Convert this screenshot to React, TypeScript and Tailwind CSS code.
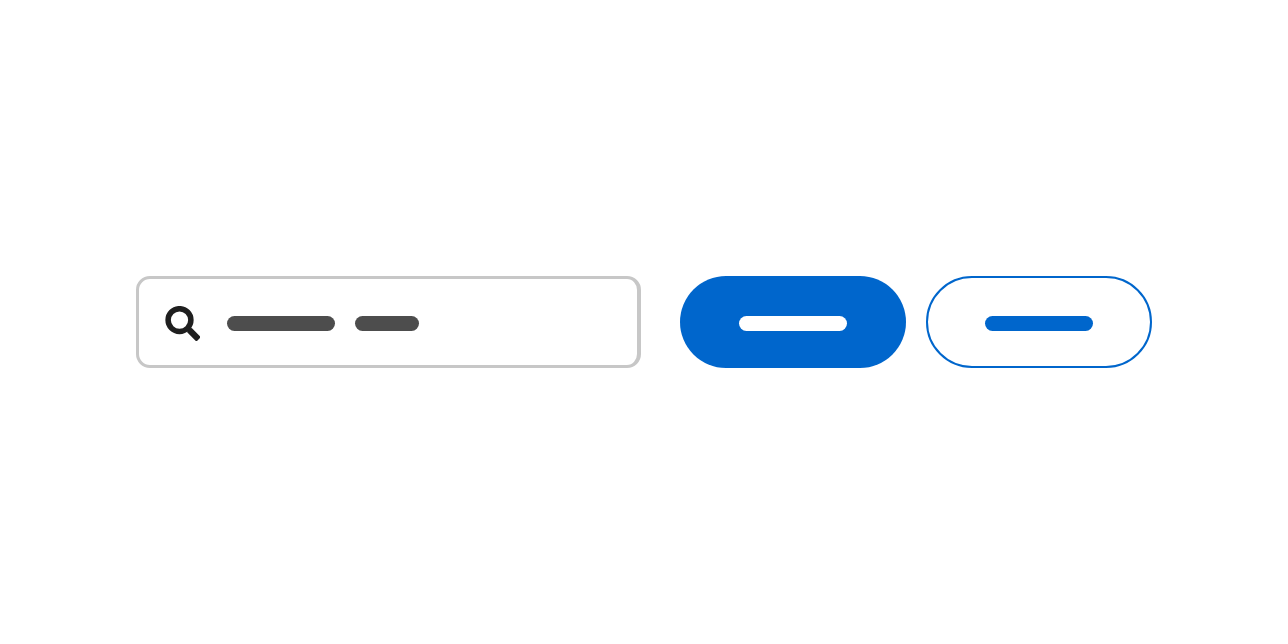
import React from "react";

function SearchIcon() {
  return (
    <svg className="size-[35px] shrink-0" viewBox="0 0 35 35" fill="none" aria-hidden="true">
      <circle cx="14.5" cy="14.1" r="11.4" stroke="#1f1f1f" strokeWidth="5.5" />
      <path d="M21.5 21.5L26 26" stroke="#1f1f1f" strokeWidth="4" />
      <rect x="-6.8" y="-3.1" width="13.6" height="6.2" rx="1.2" fill="#1f1f1f" transform="translate(28.8 28.5) rotate(45)" />
    </svg>
  );
}

export default function App() {
  return (
    <main className="flex min-h-screen items-center bg-white px-[136px] font-['Liberation_Sans',sans-serif]">
      <form className="flex w-full items-center" role="search" onSubmit={(e) => e.preventDefault()}>
        <div className="relative flex h-[92px] min-w-0 grow items-center rounded-[14px] border-[3px] border-r-4 border-[#c7c7c7] pt-[3px] pl-[26px]">
          <SearchIcon />
          <input
            type="text"
            aria-label="Search"
            placeholder=" "
            className="peer absolute inset-0 w-full rounded-xl bg-transparent pr-6 pl-[88px] text-2xl text-[#4d4d4d] outline-none"
          />
          <span className="ml-[27px] flex gap-5 peer-[:not(:placeholder-shown)]:hidden" aria-hidden="true">
            <span className="h-[15px] w-[108px] rounded-full bg-[#4d4d4d]" />
            <span className="h-[15px] w-16 rounded-full bg-[#4d4d4d]" />
          </span>
        </div>
        <div className="ml-[39px] flex shrink-0 gap-5">
          <button
            type="submit"
            aria-label="Submit"
            className="flex h-[92px] w-[226px] items-center justify-center rounded-full bg-[#0066cc] pt-[3px]"
          >
            <span className="h-[15px] w-[108px] rounded-full bg-white" />
          </button>
          <button
            type="reset"
            aria-label="Reset"
            className="flex h-[92px] w-[226px] items-center justify-center rounded-full border-2 border-[#0066cc] pt-[3px]"
          >
            <span className="h-[15px] w-[108px] rounded-full bg-[#0066cc]" />
          </button>
        </div>
      </form>
    </main>
  );
}
